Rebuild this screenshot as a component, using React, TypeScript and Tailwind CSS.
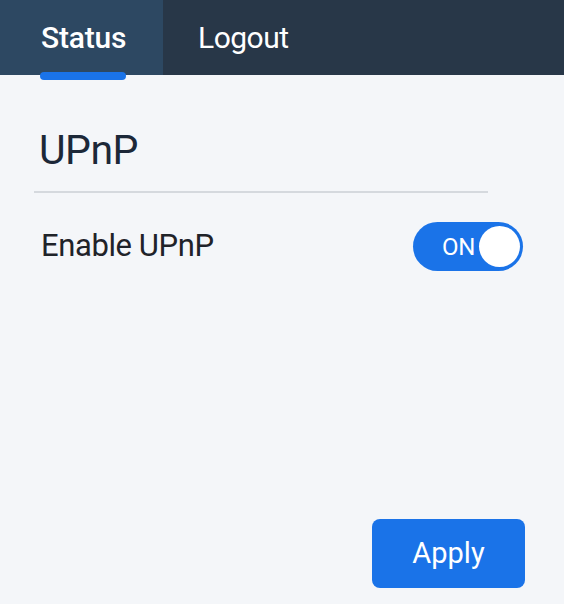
import { useState } from "react";

export default function App() {
  const [enabled, setEnabled] = useState(true);

  return (
    <div className="w-[564px] h-[604px] bg-[#f4f6f9] flex flex-col font-['Roboto',sans-serif] overflow-hidden">
      <nav className="h-[75px] bg-[#283748] flex shrink-0">
        <div className="relative w-[163px] bg-[#2d4862] flex items-center pl-[41px]">
          <span className="text-white text-[30px] font-medium tracking-[-0.2px]">Status</span>
          <span className="absolute left-[40px] top-[72px] w-[86px] h-[8px] rounded-full bg-[#1a73e8]" />
        </div>
        <div className="flex items-center pl-[35px]">
          <span className="text-white text-[30px] tracking-[-0.5px]">Logout</span>
        </div>
      </nav>

      <main className="flex-1 flex flex-col px-[34px] pb-[16px]">
        <h1 className="mt-[47px] pl-[5px] text-[41px] leading-[56px] text-[#1c2838] tracking-[-0.5px]">UPnP</h1>
        <div className="mt-[13px] h-[2px] w-[454px] bg-[#d5d9de]" />

        <div className="mt-[29px] flex items-center justify-between w-[489px]">
          <span className="pl-[7px] text-[31px] text-[#1f2329] tracking-[-0.4px]">Enable UPnP</span>
          <button
            onClick={() => setEnabled(!enabled)}
            className="relative w-[110px] h-[49px] rounded-full bg-[#1a73e8] flex items-center"
          >
            <span className="ml-[29px] text-white text-[24px] tracking-[-0.3px]">ON</span>
            <span className="absolute right-[3px] top-[4px] w-[41px] h-[41px] rounded-full bg-white" />
          </button>
        </div>

        <div className="flex-1" />
        <div className="flex justify-end w-[491px]">
          <button className="w-[153px] h-[69px] rounded-[8px] bg-[#1a73e8] text-white text-[29px]">Apply</button>
        </div>
      </main>
    </div>
  );
}
